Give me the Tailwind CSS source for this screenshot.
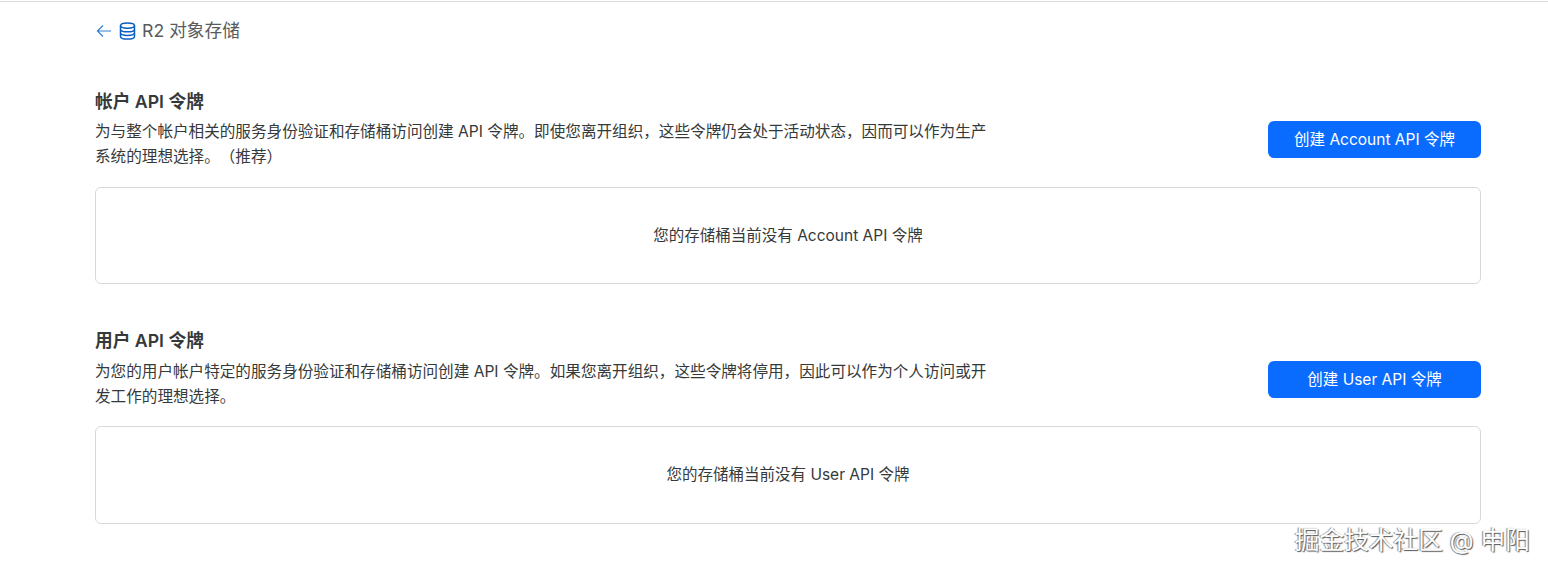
<!DOCTYPE html>
<html lang="zh">
<head>
    <meta charset="utf-8"/>
    <title>R2 对象存储</title>
    <script src="https://cdn.jsdelivr.net/npm/@tailwindcss/browser@4"></script>
</head>
<body class="relative h-[572px] overflow-hidden bg-white font-['Inter','Noto_Sans_CJK_SC',sans-serif] text-[#36393a]">
    <div class="mt-px h-px bg-[#d9d9d9]"></div>
    <main class="pl-[95px] pr-[67px]">
        <div class="flex h-[58px] items-center text-[17.700px] text-[#595b5c]">
            <svg class="mr-[7px] ml-px" width="16" height="16" viewBox="0 0 16 16" fill="none" stroke="#2f7fd0" stroke-width="1.2"><path d="M15 8H1.5M7 2.5 1.5 8 7 13.5"/></svg>
            <svg class="mr-[6px]" width="17" height="18" viewBox="0 0 17 18" fill="none" stroke="#0a5fc4" stroke-width="1.5"><ellipse cx="8.5" cy="3.6" rx="7" ry="2.6"/><path d="M1.5 3.6v10.8c0 1.5 3.1 2.6 7 2.6s7-1.100 7-2.600V3.600M1.500 7.200c0 1.500 3.100 2.600 7 2.600s7-1.100 7-2.600M1.500 10.800c0 1.500 3.100 2.600 7 2.600s7-1.100 7-2.600"/></svg>
            <span class="pt-px">R2 对象存储</span>
        </div>

        <section class="mt-[30px]">
            <div class="flex items-end justify-between">
                <div class="w-[893px]">
                    <h2 class="text-[17.700px] leading-6 font-semibold">帐户 API 令牌</h2>
                    <p class="mt-[5px] text-[15.600px] leading-[25px] [text-spacing-trim:space-all]">为与整个帐户相关的服务身份验证和存储桶访问创建 API 令牌。即使您离开组织，这些令牌仍会处于活动状态，因而可以作为生产系统的理想选择。（推荐）</p>
                </div>
                <button class="mb-[11px] h-[37px] w-[213px] rounded-md bg-[#0a6cff] text-[15.500px] text-white">创建 Account API 令牌</button>
            </div>
            <div class="mt-[18px] flex h-[97px] items-center justify-center rounded-md border border-[#d9d9d9] text-[15.500px]">您的存储桶当前没有 Account API 令牌</div>
        </section>

        <section class="mt-[45px]">
            <div class="flex items-end justify-between">
                <div class="w-[893px]">
                    <h2 class="text-[17.700px] leading-6 font-semibold">用户 API 令牌</h2>
                    <p class="mt-[6px] text-[15.600px] leading-[25px]">为您的用户帐户特定的服务身份验证和存储桶访问创建 API 令牌。如果您离开组织，这些令牌将停用，因此可以作为个人访问或开发工作的理想选择。</p>
                </div>
                <button class="mb-[11px] h-[37px] w-[213px] rounded-md bg-[#0a6cff] text-[15.500px] text-white">创建 User API 令牌</button>
            </div>
            <div class="mt-[17px] flex h-[98px] items-center justify-center rounded-md border border-[#d9d9d9] text-[15.500px]">您的存储桶当前没有 User API 令牌</div>
        </section>
    </main>
    <div class="absolute right-[18px] bottom-[14px] text-[24.700px] leading-9 text-white [text-shadow:1px_1px_1px_#555,-1px_0_1px_#888]">掘金技术社区 @ 申阳</div>
</body>
</html>
